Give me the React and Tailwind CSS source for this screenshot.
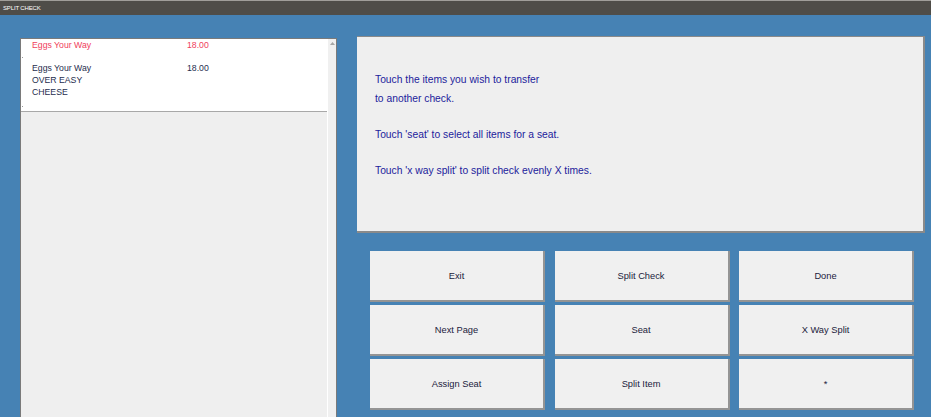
import React from "react";

const buttons = ["Exit", "Split Check", "Done", "Next Page", "Seat", "X Way Split", "Assign Seat", "Split Item", "*"];

function ItemRow({ name, price, mods = [], red }) {
  return (
    <div className={red ? "text-[#f0405c]" : "text-[#1e2d4d]"}>
      <div className="flex leading-[12px]">
        <span className="w-[155px]">{name}</span>
        <span>{price}</span>
      </div>
      {mods.map((m) => (
        <div key={m} className="leading-[12px]">{m}</div>
      ))}
    </div>
  );
}

export default function App() {
  return (
    <div className="w-[931px] h-[417px] bg-[#4682b4] flex flex-col overflow-hidden" style={{ fontFamily: "'Liberation Sans', Arial, sans-serif" }}>
      {/* title bar */}
      <div className="h-[15px] bg-[#4f4d48] border-t border-[#a09e99] flex items-center px-[3px]">
        <span className="text-[6px] text-white tracking-tight">SPLIT CHECK</span>
      </div>

      <div className="flex flex-1 min-h-0">
        {/* left check list */}
        <div className="ml-[20px] mt-[23px] w-[317px] flex border-l border-t border-r border-[#7a7a7a] bg-[#efefef]">
          <div className="flex-1 flex flex-col">
            <div className="h-[73px] bg-white border-b border-[#a8a8a8] relative text-[8.7px] pl-[11px]">
              <ItemRow name="Eggs Your Way" price="18.00" red />
              <div className="h-[11px]" />
              <ItemRow name="Eggs Your Way" price="18.00" mods={["OVER EASY", "CHEESE"]} />
              <span className="absolute left-[1px] top-[18px] w-[1px] h-[1px] bg-[#9a9a9a]" />
              <span className="absolute left-[1px] top-[67px] w-[1px] h-[1px] bg-[#9a9a9a]" />
            </div>
            <div className="flex-1" />
          </div>
          <div className="w-[1px] bg-white" />
          <div className="w-[8px] bg-[#f0f0f0] flex justify-center pt-[3px]">
            <svg width="5" height="3" viewBox="0 0 5 3">
              <path d="M2.5 0 L5 3 L0 3 Z" fill="#a6a6a6" />
            </svg>
          </div>
        </div>

        {/* right side */}
        <div className="ml-[20px] mt-[21px] w-[568px] flex flex-col">
          <div className="h-[197px] bg-[#efefef] border-t border-r-2 border-b-2 border-[#8a8a8a] pl-[18px] pt-[33px] text-[10.3px] text-[#1c1c9c]">
            <p className="leading-[19px]">Touch the items you wish to transfer</p>
            <p className="leading-[19px]">to another check.</p>
            <p className="leading-[19px] mt-[17px]">Touch 'seat' to select all items for a seat.</p>
            <p className="leading-[19px] mt-[17px]">Touch 'x way split' to split check evenly X times.</p>
          </div>

          <div className="mt-[18px] ml-[13px] grid grid-cols-[175px_175px_175px] grid-rows-[51px_51px_51px] gap-x-[9.5px] gap-y-[3px]">
            {buttons.map((b) => (
              <div key={b} className="bg-[#f0f0f0] border-r-2 border-b-2 border-[#949494] flex items-center justify-center pt-[3px] text-[9.3px] text-[#1b1b3c]">
                {b}
              </div>
            ))}
          </div>
        </div>
      </div>
    </div>
  );
}
